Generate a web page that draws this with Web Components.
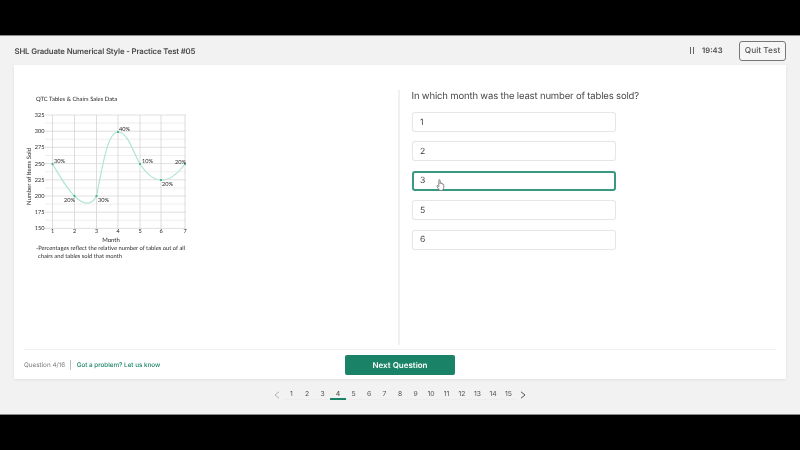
<!DOCTYPE html>
<html lang="en"><head><meta charset="utf-8"><title>Practice Test</title>
<style>
html,body{margin:0;padding:0;background:#000}
body{width:800px;height:450px;overflow:hidden;font-family:Inter,"Liberation Sans",sans-serif;text-rendering:geometricPrecision}
</style></head><body>
<test-app></test-app>
<script>
const def=(name,html,init)=>customElements.define(name,class extends HTMLElement{
  constructor(){super();this.attachShadow({mode:'open'}).innerHTML=html;}
  connectedCallback(){init&&init(this);}
});
def('test-header',`<style>
:host{display:flex;align-items:center;height:29px;padding:0 14px;box-sizing:border-box;color:#4a4a4a}
.t{flex:1;font-size:7.8px;letter-spacing:-.14px;font-weight:600;white-space:nowrap;padding-left:.5px}
.p{display:inline-flex;gap:1.8px;margin-right:8.5px}.p i{width:1.1px;height:6.5px;background:#666}
.c{font-size:7.6px;font-weight:600;margin-right:16.5px;color:#4a4a4a}
.q{width:47px;height:20px;box-sizing:border-box;border:1px solid #777;border-radius:3px;font-size:8.3px;font-weight:500;display:flex;align-items:center;justify-content:center;color:#555;background:#f6f6f6}
</style><div class="t">SHL Graduate Numerical Style - Practice Test #05</div><span class="p"><i></i><i></i></span><span class="c">19:43</span><div class="q">Quit Test</div>`);

const ticks=()=>{let s='';
 const xs=[52.5,74.5,96.5,118,140,161,185];
 for(let i=0;i<=14;i++){const y=115+i*8.1;s+=`<line x1="45" x2="186" y1="${y}" y2="${y}" stroke="${i%2?'#ebebeb':'#d8d8d8'}" stroke-width=".8"/>`;}
 xs.forEach((x,i)=>{s+=`<line x1="${x}" x2="${x}" y1="115" y2="229" stroke="#d4d4d4" stroke-width=".8"/><text x="${x}" y="233" text-anchor="middle">${i+1}</text>`;});
 [325,300,275,250,225,200,175,150].forEach((v,i)=>{s+=`<text x="44.500" y="${117+i*16.2}" text-anchor="end">${v}</text>`;});
 return s;};
const pts=[[52.5,164],[74.5,196],[96.5,196],[118,132],[140,164],[161,180],[185,164]];
const labs=[[54,163,'30%'],[64,202,'20%'],[98,202,'30%'],[119,130.5,'40%'],[142,162.5,'10%'],[162,186,'20%'],[175,164,'20%']];
def('chart-panel',`<style>:host{display:block;width:175px;height:170px}svg{display:block}
text{font:5.6px Lato,"Open Sans",sans-serif;fill:#2c2c2c}</style>
<svg width="175" height="170" viewBox="24 92 175 170">
<text x="36" y="101" style="font-size:5.9px">QTC Tables &amp; Chairs Sales Data</text>
${ticks()}
<path d="M52.5 164C60 176 66 188 74.5 196C79 201 85 204 89 203C93 202 95 199 96.5 196C102 170 107 132 118 132C128 132 133 152 140 164C146 173 153 180 161 180C171 180 178 173 185 164" fill="none" stroke="#aee5d6" stroke-width="1.2"/>
${pts.map(p=>`<rect x="${p[0]-.9}" y="${p[1]-.9}" width="1.8" height="1.8" fill="#3aa88c"/>`).join('')}
${labs.map(l=>`<text x="${l[0]}" y="${l[1]}">${l[2]}</text>`).join('')}
<text x="111" y="241.5" text-anchor="middle" style="font-size:6px">Month</text>
<text transform="translate(30.5 176.5) rotate(-90)" text-anchor="middle" style="font-size:6px">Number of Items Sold</text>
<text x="36" y="250" style="font-size:5.8px">-Percentages reflect the relative number of tables out of all</text>
<text x="38" y="258" style="font-size:5.8px">chairs and tables sold that month</text>
</svg>`);

def('answer-option',`<style>
:host{display:flex;align-items:center;box-sizing:border-box;width:204px;height:20px;padding:1px 7.5px 0;border:1px solid #e6e6e6;border-radius:3px;font-size:8.6px;color:#3d3d3d;background:#fff;box-shadow:0 0 1px #eee}
:host([selected]){border:2px solid #3a9780;padding:0 6.5px}
</style><slot></slot>`);

def('question-panel',`<style>
:host{display:flex;flex-direction:column;align-items:flex-start;flex:1;padding:0 0 0 11.5px;box-sizing:border-box;position:relative}
.q{font-size:9.5px;letter-spacing:-.16px;color:#4a4a4a;line-height:15px;white-space:nowrap;margin:0 0 8px}
.l{display:flex;flex-direction:column;gap:9.4px}
.h{position:absolute;left:36px;top:90px}
</style><div class="q"><slot name="q"></slot></div><div class="l"><slot></slot></div>
<svg class="h" width="9" height="12" viewBox="0 0 9 12"><path d="M2.8 1.3c0-.9 1.3-.9 1.3 0v3.3l.1-.5c.2-.7 1.2-.6 1.2.1l.1.6c.1-.6 1.1-.6 1.2.1l.1.7c.1-.5 1-.4 1 .3v2.2c0 1.2-.6 2-1 2.6v.7H3.200v-.7C2.300 9.700 1.500 8.500 1 7.500c-.4-.8.4-1.400 1-.8l.8.9z" fill="#fff" stroke="#6f6f6f" stroke-width=".8" stroke-linejoin="round"/></svg>`);

def('test-footer',`<style>
:host{display:grid;grid-template-columns:1fr 110px 1fr;align-items:center;height:30px;margin:0 10px;border-top:1px solid #f0f0f0;box-sizing:border-box;font-size:6.3px}
.l{display:flex;align-items:center;white-space:nowrap}
.n{color:#7a7a7a}.s{width:1px;height:10px;background:#bdbdbd;margin:0 5.500px 0 5px}.g{color:#1a8266;font-weight:500}
.b{height:20px;border-radius:2px;background:#1a8266;color:#fff;font-size:8px;font-weight:600;display:flex;align-items:center;justify-content:center}
</style><div class="l"><span class="n">Question 4/16</span><span class="s"></span><span class="g">Got a problem? Let us know</span></div><div class="b">Next Question</div><div></div>`);

def('page-nav',`<style>
:host{display:flex;justify-content:center;align-items:flex-start;padding-top:8px;height:35px;box-sizing:border-box;font-size:6.8px;color:#555}
.w{display:flex;align-items:center}
.i{width:15.5px;height:13px;display:flex;align-items:center;justify-content:center;box-sizing:border-box;border-bottom:1px solid #ededed}
.a{border-bottom:2px solid #1a8266;font-weight:500;padding-top:1px}
svg{display:block;margin:2px 3.5px 0}
</style><div class="w"><svg width="6" height="8" viewBox="0 0 6 8"><path d="M5 .8 1 4 5 7.200" fill="none" stroke="#aaa" stroke-width=".9"/></svg><div id="n" class="w"></div><svg width="6" height="8" viewBox="0 0 6 8"><path d="M1 .8 5 4 1 7.200" fill="none" stroke="#444" stroke-width=".9"/></svg></div>`,
el=>{const n=el.shadowRoot.getElementById('n');let s='';for(let i=1;i<=15;i++)s+=`<div class="i${i==4?' a':''}">${i}</div>`;n.innerHTML=s;});

def('test-app',`<style>
:host{display:flex;flex-direction:column;width:800px;height:450px;background:#000;filter:blur(.35px)}
.app{margin-top:35px;height:380px;box-sizing:border-box;border-top:1px solid #8a8a8a;border-bottom:1px solid #8a8a8a;background:#f2f2f2;display:flex;flex-direction:column}
.card{margin:0 14px;height:314px;background:#fff;box-shadow:0 1px 3px rgba(0,0,0,.08);display:flex;flex-direction:column}
.m{flex:1;display:flex;min-height:0}
.left{width:384px;box-sizing:border-box;padding:27px 0 0 10px;flex:none}
.div{width:2px;background:#f0f0f0;margin:25px 0 4px;flex:none}
.right{flex:1;display:flex;padding-top:24px}
</style><div class="app"><test-header></test-header>
<div class="card"><div class="m"><div class="left"><chart-panel></chart-panel></div><div class="div"></div>
<div class="right"><question-panel><span slot="q">In which month was the least number of tables sold?</span>
<answer-option>1</answer-option><answer-option>2</answer-option><answer-option selected>3</answer-option><answer-option>5</answer-option><answer-option>6</answer-option></question-panel></div></div>
<test-footer></test-footer></div>
<page-nav></page-nav></div>`);
</script></body></html>
